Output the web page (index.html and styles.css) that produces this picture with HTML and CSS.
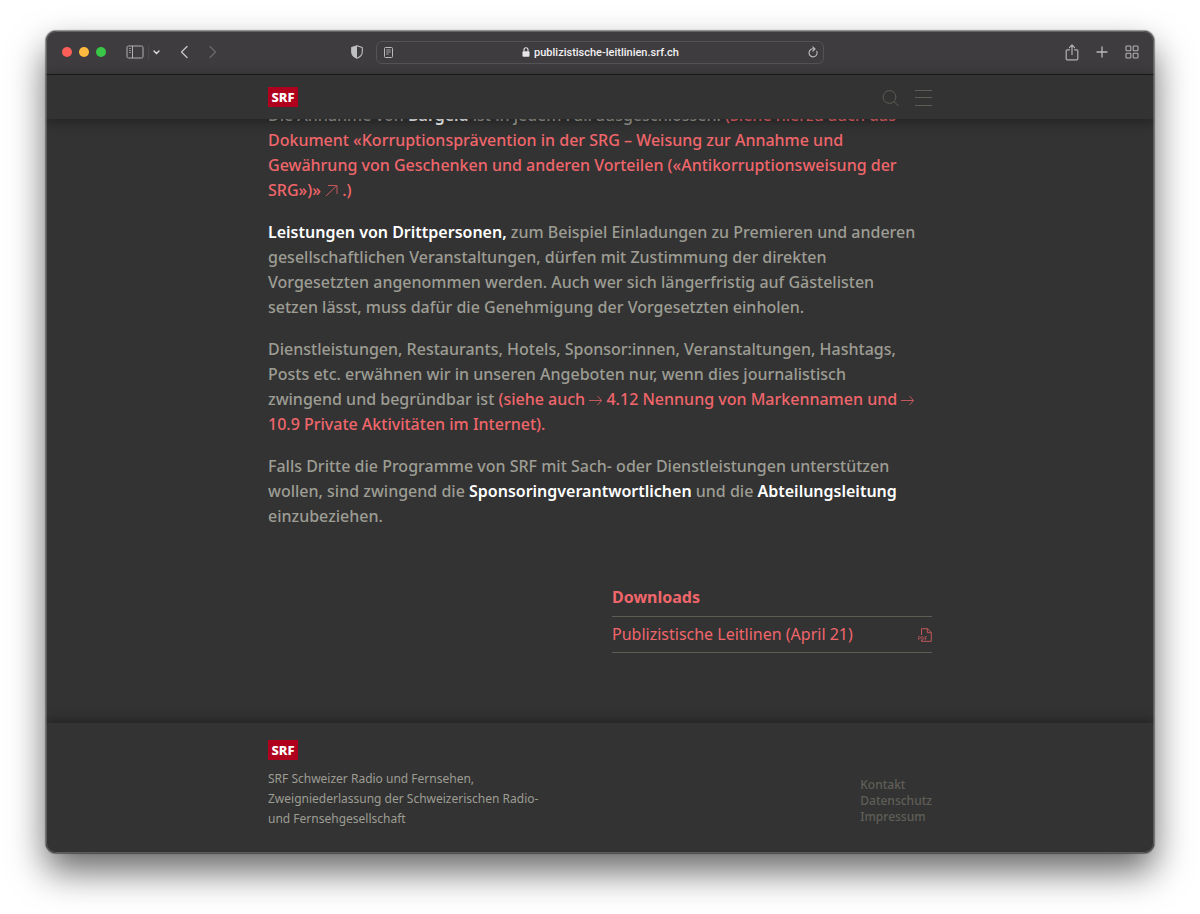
FILE: index.html
```html
<!DOCTYPE html>
<html lang="de">

<head>
    <meta charset="UTF-8" />
    <meta name="viewport" content="width=device-width, initial-scale=1.0" />
    <title>Publizistische Leitlinien - SRF</title>
    <link rel="stylesheet" href="styles.css">
</head>

<body>
    <div class="window">
        <div class="toolbar">
            <div class="toolbar-left">
                <div class="lights">
                    <span class="light red"></span>
                    <span class="light yellow"></span>
                    <span class="light green"></span>
                </div>
                <div class="sidebar-buttons">
                    <button type="button" aria-label="Seitenleiste">
                        <svg width="18" height="14" viewBox="0 0 18 14" fill="none" stroke="#b0afb1">
                            <rect x="1" y="1" width="16" height="12" rx="1.5" />
                            <path d="M6.5 1v12" />
                            <path d="M3 3.5h2M3 5.5h2M3 7.5h2" stroke-width=".7" />
                        </svg>
                    </button>
                    <button type="button" class="tab-groups" aria-label="Tabgruppen">
                        <svg width="7" height="5" viewBox="0 0 7 5" fill="none" stroke="#dddcde" stroke-width="1.4" stroke-linecap="round">
                            <path d="M1 1l2.5 2.5L6 1" />
                        </svg>
                    </button>
                </div>
                <div class="arrows">
                    <button type="button" aria-label="Zurück">
                        <svg width="8" height="14" viewBox="0 0 8 14" fill="none" stroke="#c4c3c5" stroke-width="1.4" stroke-linecap="round" stroke-linejoin="round">
                            <path d="M7 1.5L1.5 7L7 12.5" />
                        </svg>
                    </button>
                    <button type="button" aria-label="Vorwärts">
                        <svg width="8" height="14" viewBox="0 0 8 14" fill="none" stroke="#68676a" stroke-width="1.4" stroke-linecap="round" stroke-linejoin="round">
                            <path d="M1 1.5L6.5 7L1 12.5" />
                        </svg>
                    </button>
                </div>
                <button type="button" class="shield" aria-label="Datenschutzbericht">
                    <svg width="12" height="14" viewBox="0 0 12 14">
                        <path d="M6 .8L11.3 2.6V7c0 3-2.3 5-5.3 6.3C3 12 .7 10 .7 7V2.6z" fill="none" stroke="#c0bfc1" stroke-width="1.1" stroke-linejoin="round" />
                        <path d="M6 .8V13.3C3 12 .7 10 .7 7V2.6z" fill="#c0bfc1" />
                    </svg>
                </button>
            </div>
            <div class="address">
                <button type="button" aria-label="Reader">
                    <svg width="9" height="11" viewBox="0 0 9 11" fill="none" stroke="#b9b8ba">
                        <rect x=".5" y=".5" width="8" height="10" rx="1" />
                        <path d="M2.2 3h4.6M2.2 5h4.6M2.2 7h2.6" stroke-width=".8" />
                    </svg>
                </button>
                <label class="url">
                    <svg width="8" height="10" viewBox="0 0 8 10" aria-label="Adresse">
                        <rect x=".5" y="4.2" width="7" height="5.6" rx="1" fill="#e6e5e7" />
                        <path d="M2 4.5V2.8a2 2 0 0 1 4 0v1.7" fill="none" stroke="#e6e5e7" stroke-width="1.1" />
                    </svg>
                    <input type="text" value="publizistische-leitlinien.srf.ch">
                </label>
                <button type="button" aria-label="Neu laden">
                    <svg width="10" height="12" viewBox="0 0 10 12" fill="none" stroke="#b9b8ba" stroke-width="1.1" stroke-linecap="round" stroke-linejoin="round">
                        <path d="M8.7 5.2A4 4 0 1 1 5.8 2.9M4.8 .8L7 3L4.8 5.1" />
                    </svg>
                </button>
            </div>
            <div class="toolbar-right">
                <button type="button" aria-label="Teilen">
                    <svg width="14" height="17" viewBox="0 0 14 17" fill="none" stroke="#b0afb1" stroke-width="1.2" stroke-linecap="round" stroke-linejoin="round">
                        <path d="M4.5 5.8H2.2a1 1 0 0 0-1 1v8a1 1 0 0 0 1 1h9.6a1 1 0 0 0 1-1v-8a1 1 0 0 0-1-1H9.5M7 10.5V1.2M4.4 3.6L7 1l2.6 2.6" />
                    </svg>
                </button>
                <button type="button" aria-label="Neuer Tab">
                    <svg width="12" height="12" viewBox="0 0 12 12" fill="none" stroke="#b9b8ba" stroke-width="1.3" stroke-linecap="round">
                        <path d="M6 1v10M1 6h10" />
                    </svg>
                </button>
                <button type="button" aria-label="Tabübersicht">
                    <svg width="14" height="14" viewBox="0 0 14 14" fill="none" stroke="#b0afb1" stroke-width="1.1">
                        <rect x="1" y="1" width="4.8" height="4.8" rx=".8" />
                        <rect x="8.2" y="1" width="4.8" height="4.8" rx=".8" />
                        <rect x="1" y="8.2" width="4.8" height="4.8" rx=".8" />
                        <rect x="8.2" y="8.2" width="4.8" height="4.8" rx=".8" />
                    </svg>
                </button>
            </div>
        </div>

        <header>
            <div class="container header-row">
                <a href="#" class="logo">SRF</a>
                <div class="header-buttons">
                    <button type="button" aria-label="Suche">
                        <svg width="17" height="19" viewBox="0 0 17 19" fill="none" stroke="#5c5c55">
                            <circle cx="7.5" cy="9" r="6.4" />
                            <path d="M12 13.5L16.6 18.1" />
                        </svg>
                    </button>
                    <button type="button" aria-label="Menü">
                        <svg width="17" height="17" viewBox="0 0 17 17" fill="none" stroke="#5c5c55">
                            <path d="M0 1.5h17M0 8.5h17M0 16.5h17" />
                        </svg>
                    </button>
                </div>
            </div>
        </header>

        <main>
            <div class="container">
                <article>
                    <p>Die Annahme von <strong>Bargeld</strong> ist in jedem Fall ausgeschlossen. <a href="#">(Siehe hierzu auch das<br>
                        Dokument «Korruptionsprävention in der SRG – Weisung zur Annahme und<br>
                        Gewährung von Geschenken und anderen Vorteilen («Antikorruptionsweisung der<br>
                        SRG»)» <svg class="arrow" width="13" height="13" viewBox="0 0 13 13"><path d="M1 12L12 1.5M3 1.5h9v8.5" /></svg> .)</a></p>
                    <p><strong>Leistungen von Drittpersonen,</strong> zum Beispiel Einladungen zu Premieren und anderen<br>
                        gesellschaftlichen Veranstaltungen, dürfen mit Zustimmung der direkten<br>
                        Vorgesetzten angenommen werden. Auch wer sich längerfristig auf Gästelisten<br>
                        setzen lässt, muss dafür die Genehmigung der Vorgesetzten einholen.</p>
                    <p>Dienstleistungen, Restaurants, Hotels, Sponsor:innen, Veranstaltungen, Hashtags,<br>
                        Posts etc. erwähnen wir in unseren Angeboten nur, wenn dies journalistisch<br>
                        zwingend und begründbar ist <a href="#">(siehe auch <svg class="arrow" width="13" height="13" viewBox="0 0 13 13"><path d="M0 7.5h12.5M8.5 3l4 4.5l-4 4.5" /></svg> 4.12 Nennung von Markennamen und <svg class="arrow" width="13" height="13" viewBox="0 0 13 13"><path d="M0 7.5h12.5M8.5 3l4 4.5l-4 4.5" /></svg><br>
                        10.9 Private Aktivitäten im Internet).</a></p>
                    <p>Falls Dritte die Programme von SRF mit Sach- oder Dienstleistungen unterstützen<br>
                        wollen, sind zwingend die <strong>Sponsoringverantwortlichen</strong> und die <strong>Abteilungsleitung</strong><br>
                        einzubeziehen.</p>
                </article>

                <section class="downloads">
                    <h2>Downloads</h2>
                    <a href="#" class="download">
                        Publizistische Leitlinen (April 21)
                        <svg width="14" height="14" viewBox="0 0 14 14" fill="none" stroke="#c4575b">
                            <path d="M3.5 7V.7h6L13.3 4.5v8.8H3.5V12M9.3.7v4h4" />
                            <path d="M.6 12V8.5h1.2a1 1 0 0 1 0 2H.6M4 8.5V12c2.2 0 2.2-3.5 0-3.5M7.2 12V8.5H9M7.2 10.3h1.5" stroke-width=".7" />
                        </svg>
                    </a>
                </section>
            </div>
        </main>

        <footer>
            <div class="container footer-row">
                <div>
                    <a href="#" class="logo">SRF</a>
                    <p class="company">SRF Schweizer Radio und Fernsehen,<br>
                        Zweigniederlassung der Schweizerischen Radio-<br>
                        und Fernsehgesellschaft</p>
                </div>
                <nav>
                    <ul>
                        <li><a href="#">Kontakt</a></li>
                        <li><a href="#">Datenschutz</a></li>
                        <li><a href="#">Impressum</a></li>
                    </ul>
                </nav>
            </div>
        </footer>
    </div>
</body>

</html>
```
FILE: styles.css
```css
* {
    box-sizing: border-box;
}

body {
    font-family: 'Noto Sans', sans-serif;
    margin: 0;
    padding: 31px 46px 61px;
    min-height: 100vh;
    display: flex;
    background: #ffffff;
    overflow: hidden;
}

button {
    display: flex;
    padding: 0;
    border: none;
    background: none;
    cursor: pointer;
}

svg {
    display: block;
}

.window {
    flex: 1;
    display: flex;
    flex-direction: column;
    background-color: #333333;
    border-radius: 10px;
    overflow: hidden;
    box-shadow: 0 0 1px 1px rgba(0, 0, 0, 0.4), 0 18px 36px rgba(0, 0, 0, 0.6);
    position: relative;
}

/* thin light edge round the window */
.window::after {
    content: '';
    position: absolute;
    inset: 0;
    border: 1px solid rgba(255, 255, 255, 0.2);
    border-radius: 10px;
    pointer-events: none;
    z-index: 10;
}

/* browser toolbar */
.toolbar {
    display: grid;
    grid-template-columns: 1fr minmax(200px, 448px) 1fr;
    align-items: center;
    height: 44px;
    padding-bottom: 1px;
    background-color: #3e3c3f;
    border-bottom: 1px solid #1d1d1d;
}

.toolbar-left {
    display: flex;
    align-items: center;
    padding-left: 16px;
}

.lights {
    display: flex;
    gap: 6px;
}

.light {
    width: 10px;
    height: 10px;
    border-radius: 50%;
}

.lights {
    gap: 7px;
}

.red {
    background-color: #fb5f57;
}

.yellow {
    background-color: #fcbb40;
}

.green {
    background-color: #3ac748;
}

.sidebar-buttons {
    display: flex;
    align-items: center;
    gap: 4px;
    margin-left: 20px;
}

.tab-groups {
    padding: 5px 0 5px 4px;
    border-left: 1px solid #4a484b;
}

.arrows {
    display: flex;
    gap: 21px;
    margin-left: 20px;
}

.shield {
    margin-left: auto;
    margin-right: 13px;
}

.address {
    display: flex;
    align-items: center;
    justify-content: space-between;
    height: 23px;
    padding: 0 5px 0 7px;
    border: 1px solid #555356;
    border-radius: 6px;
}

.url {
    display: flex;
    align-items: center;
    gap: 4px;
}

.url input {
    field-sizing: content;
    padding: 0;
    border: none;
    outline: none;
    background: none;
    color: #f1f0f2;
    font-family: 'Roboto', sans-serif;
    font-size: 11px;
    font-weight: 500;
}

.toolbar-right {
    display: flex;
    align-items: center;
    justify-content: flex-end;
    gap: 17px;
    padding-right: 15px;
}

/* page */
.container {
    width: 100%;
    max-width: 664px;
    margin: 0 auto;
}

header {
    background-color: #333333;
    box-shadow: 0 2px 12px rgba(0, 0, 0, 0.4);
    z-index: 1;
}

.header-row {
    display: flex;
    align-items: center;
    justify-content: space-between;
    height: 44px;
}

.header-buttons {
    display: flex;
    align-items: center;
    gap: 16px;
}

.logo {
    display: block;
    width: 30px;
    background-color: #af001d;
    color: #ffffff;
    font-size: 13px;
    font-weight: 800;
    line-height: 20px;
    text-align: center;
    text-decoration: none;
}

main {
    flex: 1;
    overflow: hidden;
}

/* the article is scrolled, its first line runs under the header */
article {
    margin-top: -16px;
    color: #9d9d94;
    font-size: 16px;
    font-weight: 500;
    line-height: 25px;
    white-space: nowrap;
}

article p {
    margin: 0 0 17px;
}

article strong {
    color: #ffffff;
    font-weight: 600;
}

article a {
    color: #f0666b;
    text-decoration: none;
}

.arrow {
    display: inline;
    vertical-align: -1px;
    fill: none;
    stroke: #c4575b;
}

.downloads {
    width: 320px;
    margin: 56px 0 0 auto;
}

.downloads h2 {
    margin: 0;
    padding-bottom: 6px;
    border-bottom: 1px solid #5c5c55;
    color: #f0666b;
    font-size: 16px;
    font-weight: 700;
    line-height: 25px;
}

.download {
    display: flex;
    align-items: center;
    justify-content: space-between;
    border-bottom: 1px solid #5c5c55;
    color: #f0666b;
    font-size: 16px;
    line-height: 35px;
    text-decoration: none;
}

footer {
    padding: 17px 0 24px;
    background-color: #333333;
    box-shadow: 0 -2px 12px rgba(0, 0, 0, 0.4);
    z-index: 1;
}

.footer-row {
    display: flex;
    justify-content: space-between;
    align-items: flex-end;
}

.company {
    margin: 9px 0 0;
    color: #9d9d94;
    font-size: 12px;
    line-height: 20px;
}

footer ul {
    margin: 0;
    padding: 0 0 4px;
    list-style: none;
}

footer li {
    font-size: 12px;
    font-weight: 500;
    line-height: 16px;
}

footer li a {
    color: #5f5f58;
    text-decoration: none;
}
```
